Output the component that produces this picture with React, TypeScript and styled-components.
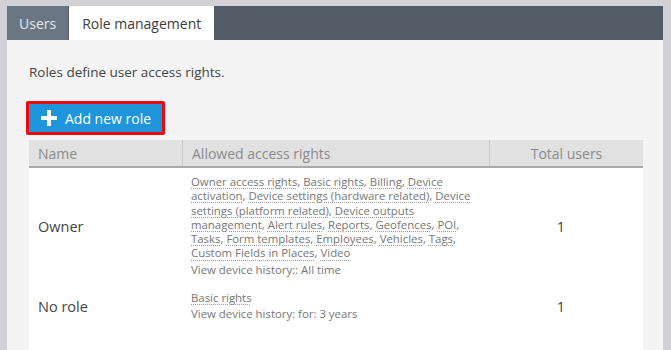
import styled, { createGlobalStyle } from 'styled-components';

const GlobalStyle = createGlobalStyle`
  html, body {
    margin: 0;
    padding: 0;
    background: #d1d1d6;
    font-family: 'Open Sans', 'Liberation Sans', sans-serif;
  }
`;

const Page = styled.div`
  padding: 6px 8px 0 7px;
  height: 350px;
  box-sizing: border-box;
  overflow: hidden;
`;

const Panel = styled.div`
  background: #f4f4f4;
  height: 100%;
`;

const TabBar = styled.div`
  display: flex;
  height: 34px;
  background: #525b66;
`;

const Tab = styled.div<{ $active?: boolean }>`
  display: flex;
  align-items: center;
  padding: 0 ${(p) => (p.$active ? '13px' : '12px')};
  font-size: 14px;
  background: ${(p) => (p.$active ? '#ffffff' : '#6b7683')};
  color: ${(p) => (p.$active ? '#3c3c3c' : '#e4e8ee')};
  margin-left: ${(p) => (p.$active ? '1px' : '0')};
`;

const Content = styled.div`
  padding: 23px 20px 0 22px;
`;

const Intro = styled.p`
  margin: 0 0 20px;
  font-size: 13.5px;
  color: #444;
`;

const AddButton = styled.button`
  display: flex;
  align-items: center;
  gap: 8px;
  margin-left: -3px;
  height: 34px;
  padding: 0 11px 0 12px;
  border: 3px solid #ea0a0f;
  border-radius: 2px;
  background: #1f96dc;
  color: #ffffff;
  font-family: inherit;
  font-size: 14px;
  font-weight: 500;
  cursor: pointer;
`;

const Table = styled.div`
  margin-top: 5px;
  background: #ffffff;
  height: 300px;
`;

const Row = styled.div`
  display: grid;
  grid-template-columns: 153px 307px 1fr;
`;

const HeadRow = styled(Row)`
  background: #e1e1e1;
  border-bottom: 2px solid #a9a9ab;
  height: 26px;
`;

const HeadCell = styled.div<{ $center?: boolean; $first?: boolean }>`
  display: flex;
  align-items: center;
  justify-content: ${(p) => (p.$center ? 'center' : 'flex-start')};
  padding-left: ${(p) => (p.$center ? '0' : '9px')};
  border-left: ${(p) => (p.$first ? 'none' : '1px solid #c9c9c9')};
  font-size: 14px;
  color: #8a8a8a;
`;

const Cell = styled.div<{ $center?: boolean }>`
  display: flex;
  align-items: center;
  justify-content: ${(p) => (p.$center ? 'center' : 'flex-start')};
  padding: 7px 10px 7px ${(p) => (p.$center ? '0' : '9px')};
  font-size: 14.5px;
  color: #444;
`;

const Rights = styled.div`
  font-size: 11.4px;
  line-height: 14.3px;
  color: #777;
  padding-right: 6px;
`;

const Right = styled.span`
  text-decoration: underline dotted #a0a0a0;
  text-underline-offset: 2px;
`;

const History = styled.div`
  margin-top: 2px;
  color: #777;
`;

function PlusIcon() {
  return (
    <svg width="16" height="16" viewBox="0 0 16 16">
      <path d="M6 0h4v6h6v4h-6v6H6v-6H0V6h6z" fill="#ffffff" />
    </svg>
  );
}

const ownerRights = [
  'Owner access rights',
  'Basic rights',
  'Billing',
  'Device activation',
  'Device settings (hardware related)',
  'Device settings (platform related)',
  'Device outputs management',
  'Alert rules',
  'Reports',
  'Geofences',
  'POI',
  'Tasks',
  'Form templates',
  'Employees',
  'Vehicles',
  'Tags',
  'Custom Fields in Places',
  'Video',
];

const roles = [
  { name: 'Owner', rights: ownerRights, history: 'View device history:: All time', users: 1 },
  { name: 'No role', rights: ['Basic rights'], history: 'View device history: for: 3 years', users: 1 },
];

export default function App() {
  return (
    <>
      <GlobalStyle />
      <Page>
        <Panel>
          <TabBar>
            <Tab>Users</Tab>
            <Tab $active>Role management</Tab>
          </TabBar>
          <Content>
            <Intro>Roles define user access rights.</Intro>
            <AddButton>
              <PlusIcon />
              Add new role
            </AddButton>
            <Table>
              <HeadRow>
                <HeadCell $first>Name</HeadCell>
                <HeadCell>Allowed access rights</HeadCell>
                <HeadCell $center>Total users</HeadCell>
              </HeadRow>
              {roles.map((role) => (
                <Row key={role.name}>
                  <Cell>{role.name}</Cell>
                  <Cell>
                    <Rights>
                      {role.rights.map((r, i) => (
                        <span key={r}>
                          <Right>{r}</Right>
                          {i < role.rights.length - 1 ? ', ' : ''}
                        </span>
                      ))}
                      <History>{role.history}</History>
                    </Rights>
                  </Cell>
                  <Cell $center>{role.users}</Cell>
                </Row>
              ))}
            </Table>
          </Content>
        </Panel>
      </Page>
    </>
  );
}
